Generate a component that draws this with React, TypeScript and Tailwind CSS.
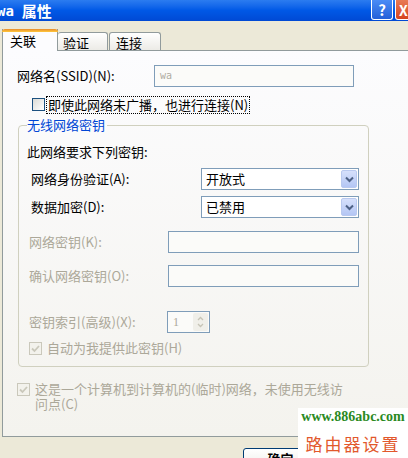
const cjk = "font-['Noto_Sans_CJK_SC','Liberation_Sans',sans-serif]";

function Box({ checked, disabled }: { checked?: boolean; disabled?: boolean }) {
  return (
    <span
      className={
        "flex h-[13px] w-[13px] shrink-0 items-center justify-center border " +
        (disabled ? "border-[#cac8bb] bg-[#f3f2ec]" : "border-[#1c5180] bg-gradient-to-br from-[#dcdcd7] to-white")
      }
    >
      {checked && (
        <svg width="9" height="9" viewBox="0 0 9 9">
          <path d="M1 4.5 L3.5 7 L8 2" fill="none" stroke={disabled ? "#cac8bb" : "#21a121"} strokeWidth="1.8" />
        </svg>
      )}
    </span>
  );
}

function Select({ value }: { value: string }) {
  return (
    <div className="flex h-[22px] w-[158px] items-center justify-between border border-[#7f9db9] bg-white pl-[4px] pr-[1px]">
      <span className="text-[13px] leading-[14px] text-black">{value}</span>
      <span className="flex h-[18px] w-[16px] items-center justify-center rounded-[2px] border border-[#b9c9ef] bg-gradient-to-b from-[#d6e0fb] to-[#b4c6f4]">
        <svg width="9" height="7" viewBox="0 0 9 7">
          <path d="M1 1.5 L4.5 5 L8 1.5" fill="none" stroke="#4d6185" strokeWidth="2" />
        </svg>
      </span>
    </div>
  );
}

function TextBox({ w, value }: { w: string; value?: string }) {
  return (
    <div className={w + " flex h-[22px] items-center border border-[#7f9db9] bg-[#fbfbf9] pl-[5px]"}>
      {value && <span className="font-['DejaVu_Sans_Mono',monospace] text-[10px] text-[#b0ada2]">{value}</span>}
    </div>
  );
}

export default function App() {
  return (
    <div className={"relative h-[458px] w-[408px] overflow-hidden bg-[#ece9d8] " + cjk}>
      {/* title bar */}
      <div className="flex h-[21px] items-center justify-between bg-gradient-to-b from-[#2b7cf0] via-[#0058e6] to-[#0049d4]">
        <div className="-ml-[3px] flex items-center gap-[8px] text-white">
          <span className="font-['DejaVu_Sans_Mono',monospace] text-[14px] font-bold leading-[14px]">wa</span>
          <span className="text-[15px] font-bold leading-[16px]">属性</span>
        </div>
        <div className="-mr-[9px] flex items-center gap-[2px] self-start">
          <span className="flex h-[20px] w-[22px] items-center justify-center rounded-b-[3px] border border-t-0 border-white bg-gradient-to-b from-[#4a8cf6] to-[#2460d8] text-[15px] font-bold leading-none text-white">
            ?
          </span>
          <span className="flex h-[20px] w-[22px] items-center justify-start rounded-b-[3px] border border-t-0 border-white bg-gradient-to-b from-[#e87a55] to-[#d6431c] pl-[3px] text-[14px] font-bold leading-none text-white">
            X
          </span>
        </div>
      </div>

      {/* tabs */}
      <div className="flex items-end pl-[2px] pt-[8px] text-[13px] leading-[14px] text-black">
        <div className="relative z-10 -mb-px flex h-[22px] w-[56px] border border-b-0 border-t-0 border-[#919b9c] bg-[#fcfcfe] pl-[7px] pt-[5px]">
          <span className="absolute -left-px -right-px top-0 h-[3px] rounded-t-[3px] bg-gradient-to-b from-[#e68b2c] to-[#ffc83c]" />
          关联
        </div>
        <div className="flex h-[18px] w-[50px] rounded-t-[3px] border border-b-0 border-l-0 border-[#919b9c] bg-gradient-to-b from-white to-[#ecebe6] pl-[5px] pt-[3px]">
          验证
        </div>
        <div className="ml-[1px] flex h-[18px] w-[52px] rounded-t-[3px] border border-b-0 border-[#919b9c] bg-gradient-to-b from-white to-[#ecebe6] pl-[6px] pt-[3px]">
          连接
        </div>
      </div>

      {/* tab page */}
      <div className="ml-[2px] h-[387px] w-[420px] border border-[#919b9c] bg-gradient-to-b from-[#fcfcfe] to-[#f4f3ee] text-[13px] leading-[14px] text-black">
        <div className="mt-[14px] flex h-[22px] items-center">
          <span className="w-[151px] pl-[14px]">网络名(SSID)(N):</span>
          <TextBox w="w-[200px]" value="wa" />
        </div>

        <div className="mt-[9px] flex h-[17px] items-center pl-[29px]">
          <Box />
          <span className="ml-px border border-dotted border-black px-px py-px">即使此网络未广播，也进行连接(N)</span>
        </div>

        <div className="relative ml-[15px] mt-[12px] h-[242px] w-[351px] rounded-[4px] border border-[#d0d0bf] px-[8px] pt-[19px]">
          <span className="absolute -top-[8px] left-[8px] bg-[#fbfbfc] pr-[2px] text-[#0046d5]">无线网络密钥</span>
          <div>此网络要求下列密钥:</div>

          <div className="mt-[9px] flex h-[22px] items-center">
            <span className="w-[174px] pl-[4px]">网络身份验证(A):</span>
            <Select value="开放式" />
          </div>
          <div className="mt-[6px] flex h-[22px] items-center">
            <span className="w-[174px] pl-[4px]">数据加密(D):</span>
            <Select value="已禁用" />
          </div>

          <div className="mt-[13px] flex h-[22px] items-center text-[#aca899]">
            <span className="w-[141px] pl-[2px]">网络密钥(K):</span>
            <TextBox w="w-[191px]" />
          </div>
          <div className="mt-[11px] flex h-[23px] items-center text-[#aca899]">
            <span className="w-[141px] pl-[2px]">确认网络密钥(O):</span>
            <TextBox w="w-[191px]" />
          </div>

          <div className="mt-[24px] flex h-[22px] items-center text-[#aca899]">
            <span className="w-[140px] pl-[2px]">密钥索引(高级)(X):</span>
            <div className="flex h-[22px] w-[43px] items-center justify-between border border-[#7f9db9] bg-[#fbfbf9] pl-[5px] pr-px">
              <span className="font-['Liberation_Serif',serif] text-[12px]">1</span>
              <span className="flex h-[18px] w-[15px] flex-col items-center justify-center gap-[2px] rounded-[2px] bg-[#f0efe9]">
                <svg width="7" height="5" viewBox="0 0 7 5">
                  <path d="M1 4 L3.5 1.5 L6 4" fill="none" stroke="#c6c4b6" strokeWidth="1.3" />
                </svg>
                <svg width="7" height="5" viewBox="0 0 7 5">
                  <path d="M1 1 L3.5 3.5 L6 1" fill="none" stroke="#c6c4b6" strokeWidth="1.3" />
                </svg>
              </span>
            </div>
          </div>

          <div className="mt-[8px] flex items-center gap-[5px] pl-[2px] text-[#aca899]">
            <Box checked disabled />
            <span>自动为我提供此密钥(H)</span>
          </div>
        </div>

        <div className="mt-[16px] flex items-start gap-[5px] pl-[14px] text-[#aca899]">
          <Box checked disabled />
          <div className="-mt-[2px] flex flex-col leading-[15px]">
            <span>这是一个计算机到计算机的(临时)网络，未使用无线访</span>
            <span>问点(C)</span>
          </div>
        </div>
      </div>

      {/* buttons */}
      <div className="ml-[243px] mt-[11px] flex h-[23px] w-[75px] justify-center rounded-[3px] border border-[#003c74] bg-gradient-to-b from-white to-[#ecebe6] pt-[3px] text-[13px] font-bold leading-[14px] text-black">
        确定
      </div>

      {/* watermark */}
      <div className="absolute left-[298px] top-[408px] flex h-[50px] w-[110px] flex-col items-center bg-white">
        <span className="mt-[1px] font-['Liberation_Serif',serif] text-[14px] font-bold leading-[16px] text-[#2b8a1f]">
          www.886abc.com
        </span>
        <span className="mt-[10px] text-[17px] leading-[18px] tracking-[2px] text-[#e2582c]">路由器设置</span>
      </div>
    </div>
  );
}
